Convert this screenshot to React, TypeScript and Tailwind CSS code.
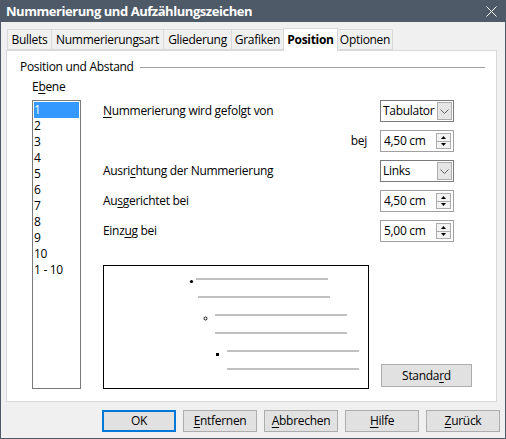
import React from 'react';

const U: React.FC<{ children: React.ReactNode }> = ({ children }) => (
  <span className="underline decoration-1 underline-offset-[2px]">{children}</span>
);

const Combo: React.FC<{ value: string }> = ({ value }) => (
  <div className="w-[74px] h-[22px] border border-[#7a7a7a] bg-white flex items-center pl-[2px] pr-px">
    <span className="flex-1 leading-none whitespace-nowrap">{value}</span>
    <div className="w-[15px] h-[18px] shrink-0 border border-[#adadad] bg-[#e5e5e5] flex items-center justify-center">
      <svg width="9" height="5" viewBox="0 0 9 5">
        <path d="M0.5 0.5 L4.5 4.5 L8.5 0.5" fill="none" stroke="#606060" strokeWidth="1" />
      </svg>
    </div>
  </div>
);

const Spin: React.FC<{ value: string }> = ({ value }) => (
  <div className="w-[74px] h-[22px] border border-[#a0a0a0] bg-white flex items-center pl-[3px] pr-px">
    <span className="flex-1 leading-none whitespace-nowrap">{value}</span>
    <div className="w-[15px] h-[16px] mr-px border border-[#adadad] bg-[#f3f3f3] flex flex-col">
      <div className="flex-1 flex items-center justify-center border-b border-[#adadad]">
        <svg width="5" height="3" viewBox="0 0 5 3">
          <path d="M0 3 L2.5 0 L5 3 Z" fill="#000" />
        </svg>
      </div>
      <div className="flex-1 flex items-center justify-center">
        <svg width="5" height="3" viewBox="0 0 5 3">
          <path d="M0 0 L2.5 3 L5 0 Z" fill="#000" />
        </svg>
      </div>
    </div>
  </div>
);

const Button: React.FC<{ children: React.ReactNode; focused?: boolean; className?: string }> = ({
  children,
  focused,
  className = '',
}) => (
  <div
    className={`h-[22px] flex items-center justify-center bg-[#e1e1e1] ${
      focused ? 'border-2 border-[#0078d7]' : 'border border-[#adadad]'
    } ${className}`}
  >
    {children}
  </div>
);

const tabs = [
  { label: 'Bullets', w: 'w-[45px]' },
  { label: 'Nummerierungsart', w: 'w-[113px]' },
  { label: 'Gliederung', w: 'w-[69px]' },
  { label: 'Grafiken', w: 'w-[53px]' },
  { label: 'Position', w: 'w-[55px]', active: true },
  { label: 'Optionen', w: 'w-[56px]' },
];

const levels = ['1', '2', '3', '4', '5', '6', '7', '8', '9', '10', '1 - 10'];

export default function App() {
  return (
    <div className="w-[506px] h-[439px] flex flex-col bg-[#4e5a68] font-['Open_Sans','Noto_Sans',sans-serif] text-[12px] tracking-[-0.3px] text-black">
      {/* title bar */}
      <div className="h-[22px] flex items-center justify-between pl-[6px] pr-[9px] pt-px">
        <span className="text-white font-bold text-[13px] tracking-[-0.45px] leading-none">
          Nummerierung und Aufzählungszeichen
        </span>
        <svg width="11" height="11" viewBox="0 0 11 11">
          <path d="M0.5 0.5 L10.5 10.5 M10.5 0.5 L0.5 10.5" stroke="#fff" strokeWidth="1" />
        </svg>
      </div>

      <div className="flex-1 mx-px mb-px bg-[#f0f0f0] flex flex-col">
        {/* tabs */}
        <div className="flex items-end pl-[6px] pt-[6px] h-[28px]">
          {tabs.map((t) =>
            t.active ? (
              <div
                key={t.label}
                className={`${t.w} h-[23px] -mb-px -ml-px relative z-10 bg-white border border-b-0 border-[#d9d9d9] flex items-center justify-center font-bold`}
              >
                {t.label}
              </div>
            ) : (
              <div
                key={t.label}
                className={`${t.w} h-[21px] bg-[#f0f0f0] border border-[#d9d9d9] -ml-px first:ml-0 flex items-center justify-center`}
              >
                {t.label}
              </div>
            )
          )}
        </div>

        {/* tab panel */}
        <div className="ml-[5px] w-[491px] h-[352px] bg-white border border-[#d9d9d9] pt-[8px] pl-[13px] pr-[11px]">
          <div className="h-[16px] flex items-center gap-[6px]">
            <span className="whitespace-nowrap">Position und Abstand</span>
            <div className="flex-1 h-px bg-[#a0a0a0]" />
          </div>

          <div className="flex pl-[12px] mt-[4px]">
            {/* Ebene */}
            <div className="flex flex-col w-[49px]">
              <div className="h-[16px] flex items-center">
                E<U>b</U>ene
              </div>
              <div className="mt-[5px] h-[289px] border border-[#7a7a7a] bg-white p-px">
                {levels.map((l, i) => (
                  <div
                    key={l}
                    className={`h-[16px] flex items-center leading-none ${
                      i === 0 ? 'bg-[#3399ff] text-white' : ''
                    }`}
                  >
                    {l}
                  </div>
                ))}
              </div>
            </div>

            {/* settings */}
            <div className="ml-[22px] mt-[21px] flex flex-col">
              <div className="w-[351px] flex flex-col gap-[8px]">
                <div className="h-[22px] flex items-center">
                  <span className="flex-1">
                    <U>N</U>ummerierung wird gefolgt von
                  </span>
                  <Combo value="Tabulator" />
                </div>
                <div className="h-[22px] flex items-center">
                  <span className="flex-1 text-right pr-[13px]">
                    be<U>j</U>
                  </span>
                  <Spin value="4,50 cm" />
                </div>
                <div className="h-[22px] flex items-center">
                  <span className="flex-1">
                    Ausri<U>c</U>htung der Nummerierung
                  </span>
                  <Combo value="Links" />
                </div>
                <div className="h-[22px] flex items-center">
                  <span className="flex-1">
                    Au<U>s</U>gerichtet bei
                  </span>
                  <Spin value="4,50 cm" />
                </div>
                <div className="h-[22px] flex items-center">
                  <span className="flex-1">
                    Einz<U>u</U>g bei
                  </span>
                  <Spin value="5,00 cm" />
                </div>
              </div>

              <div className="mt-[23px] flex items-end gap-[12px]">
                <div className="w-[266px] h-[124px] border border-black bg-white">
                  <svg width="264" height="122" viewBox="0 0 264 122">
                    <g stroke="#c0c0c0" strokeWidth="2">
                      <line x1="92" y1="13" x2="224" y2="13" />
                      <line x1="94" y1="31" x2="226" y2="31" />
                      <line x1="111" y1="49" x2="243" y2="49" />
                      <line x1="111" y1="67" x2="243" y2="67" />
                      <line x1="123" y1="85" x2="255" y2="85" />
                      <line x1="123" y1="103" x2="255" y2="103" />
                    </g>
                    <circle cx="87.5" cy="15.5" r="1.6" fill="#000" />
                    <circle cx="101.5" cy="52.5" r="1.5" fill="none" stroke="#000" strokeWidth="0.9" />
                    <rect x="112" y="87" width="3" height="3" fill="#000" />
                  </svg>
                </div>
                <Button className="w-[91px] h-[23px] mb-[2px]">
                  Standa<U>r</U>d
                </Button>
              </div>
            </div>
          </div>
        </div>

        {/* dialog buttons */}
        <div className="mt-[8px] flex justify-end gap-[7px] pr-[5px]">
          <Button focused className="w-[74px]">
            OK
          </Button>
          <Button className="w-[74px]">
            <U>E</U>ntfernen
          </Button>
          <Button className="w-[74px]">
            <U>A</U>bbrechen
          </Button>
          <Button className="w-[74px]">
            <U>H</U>ilfe
          </Button>
          <Button className="w-[74px]">
            <U>Z</U>urück
          </Button>
        </div>
      </div>
    </div>
  );
}
